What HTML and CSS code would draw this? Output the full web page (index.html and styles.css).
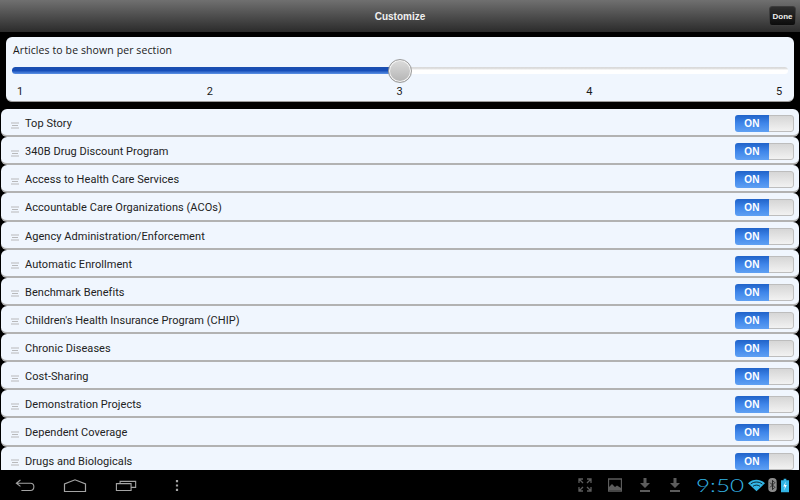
FILE: index.html
```html
<!DOCTYPE html>
<html lang="en">
  <head>
    <meta charset="UTF-8" />
    <title>Customize</title>
    <link rel="stylesheet" href="styles.css">
  </head>
  <body>
    <!-- Title Bar -->
    <div class="title-bar">
      <div class="title">Customize</div>
      <div class="done-button">Done</div>
    </div>

    <!-- Articles Slider -->
    <div class="slider-panel">
      <div class="slider-label">Articles to be shown per section</div>
      <div class="slider-track">
        <div class="slider-fill"></div>
        <div class="slider-rest"></div>
        <div class="slider-thumb"></div>
      </div>
      <div class="slider-ticks">
        <span>1</span>
        <span>2</span>
        <span>3</span>
        <span>4</span>
        <span>5</span>
      </div>
    </div>

    <!-- Section List -->
    <div class="section-list">
      <div class="section-row"><svg class="grip" viewBox="0 0 8 7"><path d="M0 1h8M1 3.500h6M0 6h8"/></svg><span class="section-name">Top Story</span><div class="toggle"><div class="toggle-on">ON</div><div class="toggle-off"></div></div></div>
      <div class="section-row"><svg class="grip" viewBox="0 0 8 7"><path d="M0 1h8M1 3.500h6M0 6h8"/></svg><span class="section-name">340B Drug Discount Program</span><div class="toggle"><div class="toggle-on">ON</div><div class="toggle-off"></div></div></div>
      <div class="section-row"><svg class="grip" viewBox="0 0 8 7"><path d="M0 1h8M1 3.500h6M0 6h8"/></svg><span class="section-name">Access to Health Care Services</span><div class="toggle"><div class="toggle-on">ON</div><div class="toggle-off"></div></div></div>
      <div class="section-row"><svg class="grip" viewBox="0 0 8 7"><path d="M0 1h8M1 3.500h6M0 6h8"/></svg><span class="section-name">Accountable Care Organizations (ACOs)</span><div class="toggle"><div class="toggle-on">ON</div><div class="toggle-off"></div></div></div>
      <div class="section-row"><svg class="grip" viewBox="0 0 8 7"><path d="M0 1h8M1 3.500h6M0 6h8"/></svg><span class="section-name">Agency Administration/Enforcement</span><div class="toggle"><div class="toggle-on">ON</div><div class="toggle-off"></div></div></div>
      <div class="section-row"><svg class="grip" viewBox="0 0 8 7"><path d="M0 1h8M1 3.500h6M0 6h8"/></svg><span class="section-name">Automatic Enrollment</span><div class="toggle"><div class="toggle-on">ON</div><div class="toggle-off"></div></div></div>
      <div class="section-row"><svg class="grip" viewBox="0 0 8 7"><path d="M0 1h8M1 3.500h6M0 6h8"/></svg><span class="section-name">Benchmark Benefits</span><div class="toggle"><div class="toggle-on">ON</div><div class="toggle-off"></div></div></div>
      <div class="section-row"><svg class="grip" viewBox="0 0 8 7"><path d="M0 1h8M1 3.500h6M0 6h8"/></svg><span class="section-name">Children's Health Insurance Program (CHIP)</span><div class="toggle"><div class="toggle-on">ON</div><div class="toggle-off"></div></div></div>
      <div class="section-row"><svg class="grip" viewBox="0 0 8 7"><path d="M0 1h8M1 3.500h6M0 6h8"/></svg><span class="section-name">Chronic Diseases</span><div class="toggle"><div class="toggle-on">ON</div><div class="toggle-off"></div></div></div>
      <div class="section-row"><svg class="grip" viewBox="0 0 8 7"><path d="M0 1h8M1 3.500h6M0 6h8"/></svg><span class="section-name">Cost-Sharing</span><div class="toggle"><div class="toggle-on">ON</div><div class="toggle-off"></div></div></div>
      <div class="section-row"><svg class="grip" viewBox="0 0 8 7"><path d="M0 1h8M1 3.500h6M0 6h8"/></svg><span class="section-name">Demonstration Projects</span><div class="toggle"><div class="toggle-on">ON</div><div class="toggle-off"></div></div></div>
      <div class="section-row"><svg class="grip" viewBox="0 0 8 7"><path d="M0 1h8M1 3.500h6M0 6h8"/></svg><span class="section-name">Dependent Coverage</span><div class="toggle"><div class="toggle-on">ON</div><div class="toggle-off"></div></div></div>
      <div class="section-row"><svg class="grip" viewBox="0 0 8 7"><path d="M0 1h8M1 3.500h6M0 6h8"/></svg><span class="section-name">Drugs and Biologicals</span><div class="toggle"><div class="toggle-on">ON</div><div class="toggle-off"></div></div></div>
    </div>

    <!-- System Bar -->
    <div class="system-bar">
      <div class="nav-buttons">
        <svg class="nav-back" viewBox="0 0 22 14"><path d="M6 1L1.500 4.500 6 8M2 4.500h15c5 0 5 8 0 8H7"/></svg>
        <svg class="nav-home" viewBox="0 0 24 13"><path d="M1.500 12.500V5L12 .8 22.500 5v7.500z"/></svg>
        <svg class="nav-recent" viewBox="0 0 24 12"><path d="M1 4h16v7.500H1zM5 4V1.500h17V8h-5"/></svg>
        <svg class="nav-menu" viewBox="0 0 4 12"><path d="M.8 0h2.400v2.400H.8zM.8 4.800h2.400v2.400H.8zM.8 9.600h2.400V12H.8z"/></svg>
      </div>
      <div class="status-area">
        <svg class="status-icon" viewBox="0 0 14 14"><path d="M1 5V1h4M1 1l4 4M9 1h4v4M13 1L9 5M1 9v4h4M1 13l4-4M13 9v4H9M13 13L9 9"/></svg>
        <svg class="status-icon" viewBox="0 0 14 14"><path d="M.5 1h13v12H.5z"/><path class="dim-fill" d="M1 12V9l3-3 3 3 2-1.500L13 10v2z"/></svg>
        <svg class="status-icon" viewBox="0 0 14 14"><path class="dim-fill" d="M5.500 0h3v5H12L7 10 2 5h3.500zM2 12h10v2H2z"/></svg>
        <svg class="status-icon" viewBox="0 0 14 14"><path class="dim-fill" d="M5.500 0h3v5H12L7 10 2 5h3.500zM2 12h10v2H2z"/></svg>
        <div class="clock-box"><span class="clock">9:50</span></div>
        <svg class="wifi" viewBox="0 0 22 15"><path d="M0 4.500C6-1.500 16-1.500 22 4.500L11 15z"/><path class="wifi-gap" d="M3.500 5.500c4.500-3.300 10.500-3.300 15 0M6.500 8.500c2.800-2 6.200-2 9 0"/></svg>
        <svg class="bluetooth" viewBox="0 0 9 15"><rect width="9" height="15" rx="4"/><path d="M2 5l5 5-2.500 2.500v-10L7 5l-5 5"/></svg>
        <svg class="battery" viewBox="0 0 9 15"><path d="M3 0h3v1.500h3V15H0V1.500h3z"/><path class="bolt" d="M5.500 3L2.500 8.500h2L3.500 13l3-6h-2z"/></svg>
      </div>
    </div>
  </body>
</html>
```

FILE: styles.css
```css
* {
  margin: 0;
  padding: 0;
  box-sizing: border-box;
}

body {
  background-color: #000;
  width: 800px;
  height: 500px;
  overflow: hidden;
  display: flex;
  flex-direction: column;
  font-family: "Open Sans", Arial, sans-serif;
  color: #1a1a1a;
}

/* Title Bar */
.title-bar {
  height: 32px;
  flex-shrink: 0;
  position: relative;
  display: flex;
  justify-content: center;
  align-items: center;
  background: linear-gradient(#707070, #2b2b2b);
}

.title {
  font-family: "Liberation Sans", Arial, sans-serif;
  font-size: 10px;
  font-weight: bold;
  color: #f0f0f0;
}

.done-button {
  position: absolute;
  top: 6px;
  right: 4px;
  width: 27px;
  height: 20px;
  border-radius: 3px;
  background: linear-gradient(#2e2e2e, #0c0c0c);
  border: 1px solid #3c3c3c;
  color: #eee;
  font-family: "Liberation Sans", Arial, sans-serif;
  font-size: 8px;
  font-weight: bold;
  display: flex;
  justify-content: center;
  align-items: center;
}

/* Articles Slider */
.slider-panel {
  height: 65px;
  flex-shrink: 0;
  margin: 5px 6px 7px;
  padding: 6px 6px 0;
  background-color: #f0f6fe;
  border-radius: 6px;
  border-bottom: 1px solid #9a9a9a;
}

.slider-label {
  font-size: 10.500px;
  line-height: 14px;
  letter-spacing: 0.1px;
  margin-left: 1px;
}

.slider-track {
  position: relative;
  display: flex;
  height: 7px;
  margin-top: 10px;
}

.slider-fill {
  width: 50%;
  border-radius: 4px 0 0 4px;
  background: linear-gradient(#1c4fae, #164db8 50%, #5c92e6);
}

.slider-rest {
  flex: 1;
  border-radius: 0 4px 4px 0;
  background: linear-gradient(#d8d8d8, #e2e2e2 30%, #fff 40%);
}

.slider-thumb {
  position: absolute;
  left: 376px;
  top: -8.500px;
  width: 24px;
  height: 24px;
  border-radius: 50%;
  border: 1px solid #9c9c9c;
  background: linear-gradient(#dcdcdc, #b4b4b4);
  box-shadow: 0 0 0 1px #f4f4f4 inset;
}

.slider-ticks {
  display: flex;
  justify-content: space-between;
  margin: 11px -2px 0 -2px;
  padding-right: 1px;
  font-family: Roboto, Arial, sans-serif;
  font-size: 11px;
  line-height: 14px;
}

.slider-ticks span {
  width: 20px;
  text-align: center;
}

/* Section List */
.section-list {
  flex: 1;
  min-height: 0;
  overflow: hidden;
  padding: 0 1px;
}

.section-row {
  height: 28.125px;
  display: flex;
  align-items: center;
  padding: 3px 5px 0 10px;
  background-color: #f0f6fe;
  border-radius: 6px;
  border-bottom: 2px solid #b2b2b2;
}

.grip {
  width: 8px;
  height: 7px;
  margin: 3px 6px 0 0;
  fill: none;
  stroke: #aaa;
  stroke-width: 0.8;
}

.section-name {
  flex: 1;
  font-family: Roboto, Arial, sans-serif;
  font-size: 11px;
  letter-spacing: 0.05px;
  color: #222;
}

.toggle {
  width: 59px;
  height: 17px;
  display: flex;
  border-radius: 3px;
  overflow: hidden;
}

.toggle-on {
  width: 34px;
  display: flex;
  justify-content: center;
  align-items: center;
  background: linear-gradient(#2063c9, #3f86ea 50%, #5fa0f3);
  color: #fff;
  font-family: "Liberation Sans", Arial, sans-serif;
  font-size: 10px;
  font-weight: bold;
  letter-spacing: 0.3px;
}

.toggle-off {
  flex: 1;
  background: linear-gradient(#d6d6d6, #f2f2f2);
  border: 1px solid #bdbdbd;
  border-left: 0;
  border-radius: 0 3px 3px 0;
}

/* System Bar */
.system-bar {
  height: 30px;
  flex-shrink: 0;
  display: flex;
  justify-content: space-between;
  align-items: center;
  background-color: #000;
}

.nav-buttons {
  display: flex;
  align-items: center;
  margin-left: 15px;
}

.nav-buttons svg {
  fill: none;
  stroke: #a4a4a4;
  stroke-width: 1.200;
}

.nav-back {
  width: 20px;
  height: 13px;
  margin-right: 28px;
}

.nav-home {
  width: 24px;
  height: 13px;
  margin-right: 28px;
}

.nav-recent {
  width: 23px;
  height: 11px;
  margin-right: 37px;
}

.nav-buttons .nav-menu {
  width: 4px;
  height: 11px;
  fill: #a4a4a4;
  stroke: none;
}

.status-area {
  display: flex;
  align-items: center;
  margin-right: 11px;
}

.status-icon {
  width: 14px;
  height: 14px;
  margin-right: 16px;
  fill: none;
  stroke: #5c5c5c;
  stroke-width: 1.300;
}

.dim-fill {
  fill: #5c5c5c;
  stroke: none;
}

/* Stock clock digits are far wider than any installed light face */
.clock-box {
  width: 52px;
  margin-left: -2px;
}

.clock {
  display: inline-block;
  font-family: Lato, Roboto, sans-serif;
  font-size: 18px;
  font-weight: 300;
  color: #33b5e5;
  transform: scaleX(1.350);
  transform-origin: left center;
}

.wifi {
  width: 17px;
  height: 13px;
  margin-right: 3px;
  fill: #33b5e5;
}

.wifi-gap {
  fill: none;
  stroke: #000;
  stroke-width: 1;
}

.bluetooth {
  width: 9px;
  height: 14px;
  margin-right: 4px;
  fill: #8c8c8c;
}

.bluetooth path {
  fill: none;
  stroke: #222;
  stroke-width: 1;
}

.battery {
  width: 8px;
  height: 15px;
  fill: #33b5e5;
}

.bolt {
  fill: #fff;
}
```
